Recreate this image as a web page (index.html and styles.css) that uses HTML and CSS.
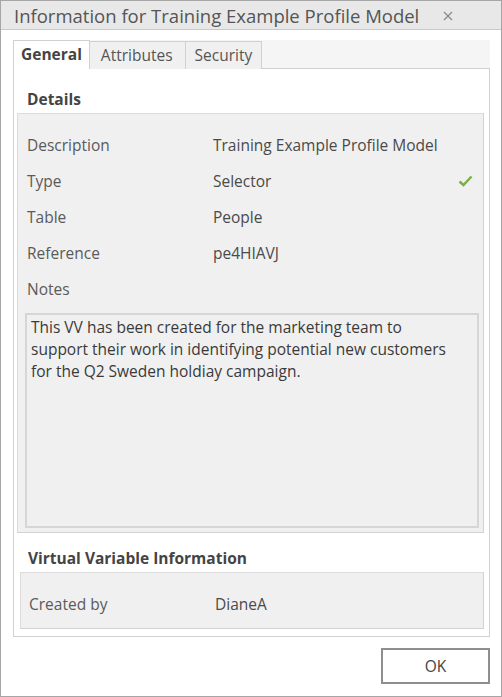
FILE: index.html
```html
<!DOCTYPE html>
<html lang="en">
<head>
    <meta charset="UTF-8">
    <meta name="viewport" content="width=device-width, initial-scale=1.0">
    <title>Information</title>
    <link rel="stylesheet" href="styles.css">
</head>
<body>
    <div class="window">
        <div class="titlebar">
            <span class="title">Information for Training Example Profile Model</span>
            <svg class="close" width="10" height="10" viewBox="0 0 10 10">
                <path d="M1 1 L9 9 M9 1 L1 9" stroke="#8c8c8c" stroke-width="1.4" fill="none"/>
            </svg>
        </div>

        <div class="content">
            <div class="tabs">
                <div class="tab active">General</div>
                <div class="tab">Attributes</div>
                <div class="tab">Security</div>
            </div>

            <div class="panel">
                <div class="section-title">Details</div>
                <div class="group details">
                    <div class="row">
                        <span class="label">Description</span>
                        <span class="value">Training Example Profile Model</span>
                    </div>
                    <div class="row">
                        <span class="label">Type</span>
                        <span class="value">Selector</span>
                        <svg class="check" width="15" height="12" viewBox="0 0 15 12">
                            <path d="M1.5 6.5 L5.5 10 L13.5 1.5" stroke="#78b043" stroke-width="2.4" fill="none"/>
                        </svg>
                    </div>
                    <div class="row">
                        <span class="label">Table</span>
                        <span class="value">People</span>
                    </div>
                    <div class="row">
                        <span class="label">Reference</span>
                        <span class="value">pe4HIAVJ</span>
                    </div>
                    <div class="row">
                        <span class="label">Notes</span>
                    </div>
                    <div class="notes">This VV has been created for the marketing team to support their work in identifying potential new customers for the Q2 Sweden holdiay campaign.</div>
                </div>

                <div class="section-title second">Virtual Variable Information</div>
                <div class="group created">
                    <div class="row">
                        <span class="label">Created by</span>
                        <span class="value">DianeA</span>
                    </div>
                </div>
            </div>

            <div class="footer">
                <button class="ok-button">OK</button>
            </div>
        </div>
    </div>
</body>
</html>
```

FILE: styles.css
```css
body {
    margin: 0;
    background: #ffffff;
    font-family: "Open Sans", "Noto Sans", sans-serif;
    font-size: 15.5px;
    color: #555555;
}

.window {
    width: 502px;
    height: 697px;
    box-sizing: border-box;
    border: 1px solid #a6a6a6;
    background: #ffffff;
}

.titlebar {
    height: 28px;
    background: #e8e8e8;
    border-bottom: 1px solid #c9c9c9;
    display: flex;
    align-items: center;
    justify-content: space-between;
    padding: 0 48px 0 13px;
}

.title {
    font-size: 18.5px;
    color: #555555;
    white-space: nowrap;
}

.close {
    margin-top: 1px;
}

.content {
    padding: 10px 11px 0 12px;
}

.tabs {
    display: flex;
    height: 28px;
    background: #f5f5f5;
}

.tab {
    box-sizing: border-box;
    height: 28px;
    margin-top: 1px;
    padding: 0 9px;
    line-height: 26px;
    background: #f0f0f0;
    border: 1px solid #d0d0d0;
    border-left: none;
    border-bottom: none;
    color: #555555;
}

.tab.active {
    margin-top: 0;
    height: 29px;
    position: relative;
    z-index: 1;
    padding: 0 7px;
    background: #ffffff;
    border-left: 1px solid #d0d0d0;
    font-weight: bold;
    color: #444444;
}

.tab:nth-child(2) {
    padding: 0 12px 0 11px;
}

.panel {
    box-sizing: border-box;
    height: 569px;
    border: 1px solid #d0d0d0;
    padding: 20px 5px 0 3px;
}

.section-title {
    height: 20px;
    line-height: 20px;
    margin: 0 0 4px 10px;
    font-weight: bold;
    font-size: 15.5px;
    color: #444444;
}

.section-title.second {
    margin: 15px 0 4px 11px;
}

.group {
    background: #f0f0f0;
    border: 1px solid #dcdcdc;
    border-right-color: #d2d2d2;
    border-bottom-color: #d2d2d2;
}

.details {
    height: 420px;
    box-sizing: border-box;
    padding: 13px 4px 0 7px;
}

.created {
    height: 57px;
    box-sizing: border-box;
    margin-left: 3px;
    padding: 13px 4px 0 6px;
}

.row {
    display: flex;
    align-items: center;
    height: 36px;
}

.label {
    width: 186px;
    padding-left: 2px;
    flex-shrink: 0;
    color: #5a5a5a;
}

.value {
    flex: 1;
    color: #4a4a4a;
}

.check {
    margin-right: 6px;
}

.notes {
    box-sizing: border-box;
    height: 215px;
    margin-top: 6px;
    border: 2px solid #d6d6d6;
    padding: 1px 20px 1px 4px;
    line-height: 22px;
    color: #3a3a3a;
}

.footer {
    display: flex;
    justify-content: flex-end;
    padding-top: 11px;
}

.ok-button {
    width: 109px;
    height: 36px;
    background: #ffffff;
    border: 2px solid #8e8e8e;
    font-family: "Open Sans", "Noto Sans", sans-serif;
    font-size: 15.5px;
    color: #444444;
    cursor: pointer;
}
```
